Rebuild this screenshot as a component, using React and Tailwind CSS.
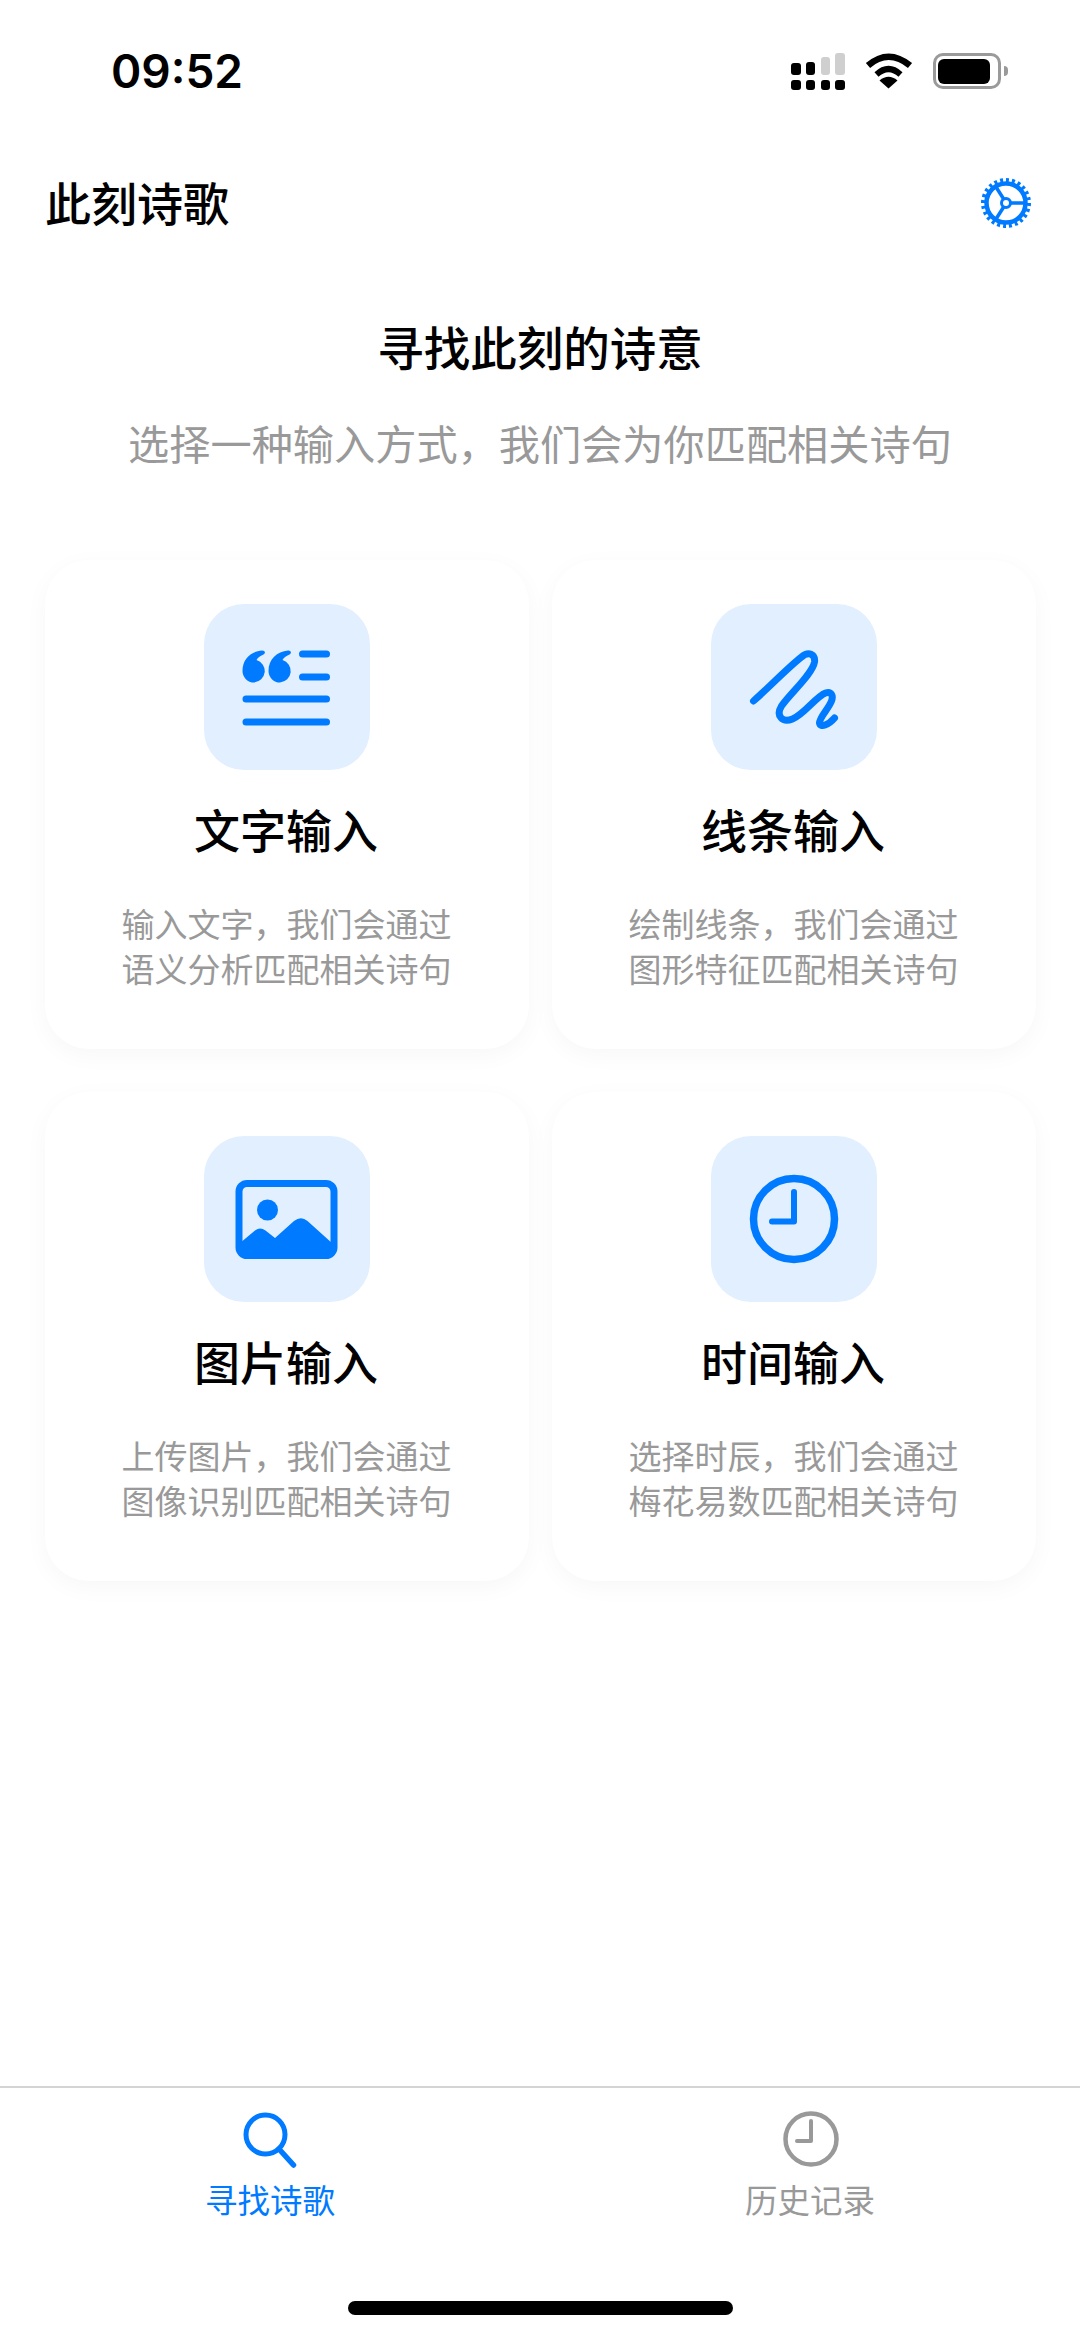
import React from 'react';

const BLUE = '#007AFF';
const cjk = "font-['Noto_Sans_CJK_SC','Noto_Sans',sans-serif]";

const QuoteIcon = () => (
    <svg className="size-[166px]" viewBox="24 22 166 166" fill="none">
        <path d="M74 100.500A11.500 11.500 0 0 1 62.500 89C62.500 77 71 69.500 82 68.500C85 68.500 86 71 83.500 72.500C80 74 77.500 76 76.500 78A11.500 11.500 0 0 1 74 100.500Z" fill={BLUE} />
        <path d="M100 100.500A11.500 11.500 0 0 1 88.500 89C88.500 77 97 69.500 108 68.500C111 68.500 112 71 109.500 72.500C106 74 103.500 76 102.500 78A11.500 11.500 0 0 1 100 100.500Z" fill={BLUE} />
        <g stroke={BLUE} strokeWidth="7" strokeLinecap="round">
            <path d="M122.500 72H146.500" />
            <path d="M122.500 95H146.500" />
            <path d="M66 117H146.500" />
            <path d="M66 140H146.500" />
        </g>
    </svg>
);

const ScribbleIcon = () => (
    <svg className="size-[166px]" viewBox="19.500 22 166 166" fill="none">
        <path
            d="M62 119C80 103 96 86 110 75C117 69 124 72 123 80C121 92 100 110 90 124C84 134 91 141 101 137C113 132 124 115 134 111C140 109 142 114 140 119C137 127 128 135 128 141C129 146 137 143 143 136"
            stroke={BLUE}
            strokeWidth="7"
            strokeLinecap="round"
            strokeLinejoin="round"
        />
    </svg>
);

const ImageIcon = () => (
    <svg className="size-[166px]" viewBox="24 20 166 166" fill="none">
        <rect x="59" y="67.500" width="95" height="72" rx="8" stroke={BLUE} strokeWidth="7" />
        <circle cx="87.500" cy="94" r="10.500" fill={BLUE} />
        <path d="M60 127L75 114.500Q80 110.500 85.500 114.500L95 122L114 105Q121 99.500 127.500 105L153 128V140H60Z" fill={BLUE} />
    </svg>
);

const ClockIcon = () => (
    <svg className="size-[166px]" viewBox="0 0 166 166" fill="none">
        <circle cx="83" cy="83" r="40.500" stroke={BLUE} strokeWidth="7.500" />
        <path d="M83 56V85.500H61" stroke={BLUE} strokeWidth="6" strokeLinecap="round" strokeLinejoin="round" />
    </svg>
);

const SignalIcon = () => (
    <div className="flex flex-col gap-[5px] w-[54px]">
        <div className="flex items-end justify-between h-[22px]">
            <div className="w-[9.5px] h-[12px] rounded-[3px] bg-black" />
            <div className="w-[9.5px] h-[13px] rounded-[3px] bg-black" />
            <div className="w-[9.5px] h-[18px] rounded-[3px] bg-[#cfcfcf]" />
            <div className="w-[9.5px] h-[22px] rounded-[3px] bg-[#cfcfcf]" />
        </div>
        <div className="flex justify-between">
            <div className="w-[9.5px] h-[10px] rounded-[3px] bg-black" />
            <div className="w-[9.5px] h-[10px] rounded-[3px] bg-black" />
            <div className="w-[9.5px] h-[10px] rounded-[3px] bg-black" />
            <div className="w-[9.5px] h-[10px] rounded-[3px] bg-black" />
        </div>
    </div>
);

const WifiIcon = () => (
    <svg className="w-[48px] h-[36px]" viewBox="0 0 48 36" fill="none">
        <path d="M3 12.500Q23.500 -5 45 12.500" stroke="#000" strokeWidth="6.500" />
        <path d="M11.500 21.500Q23.500 10.500 35.500 21.500" stroke="#000" strokeWidth="6" />
        <path d="M23.500 35.500L14.500 27.500Q23.500 20 32.500 27.500Z" fill="#000" />
    </svg>
);

const BatteryIcon = () => (
    <div className="flex items-center">
        <div className="w-[68px] h-[36px] rounded-[10px] border-[3px] border-[#9a9a9a] pl-[2px] flex items-center">
            <div className="w-[52px] h-[25px] rounded-[6px] bg-black" />
        </div>
        <div className="ml-[3px] w-[4px] h-[10px] rounded-r-full bg-[#9a9a9a]" />
    </div>
);

const GearIcon = () => (
    <svg className="size-[52px]" viewBox="0 0 52 52" fill="none">
        <circle cx="26" cy="26" r="22.500" stroke={BLUE} strokeWidth="5" pathLength="48" strokeDasharray="1 1" />
        <circle cx="26" cy="26" r="19.500" stroke={BLUE} strokeWidth="4.500" />
        <path d="M30 26H45M24 22.500L16 10M24 29.500L16 42" stroke={BLUE} strokeWidth="3.500" />
        <circle cx="26" cy="26" r="4.500" stroke={BLUE} strokeWidth="3" />
    </svg>
);

const cards = [
    { title: '文字输入', lines: ['输入文字，我们会通过', '语义分析匹配相关诗句'], Icon: QuoteIcon },
    { title: '线条输入', lines: ['绘制线条，我们会通过', '图形特征匹配相关诗句'], Icon: ScribbleIcon },
    { title: '图片输入', lines: ['上传图片，我们会通过', '图像识别匹配相关诗句'], Icon: ImageIcon },
    { title: '时间输入', lines: ['选择时辰，我们会通过', '梅花易数匹配相关诗句'], Icon: ClockIcon },
];

const Card = ({ title, lines, Icon }) => (
    <div className="h-[489px] rounded-[44px] bg-white shadow-[0_6px_24px_rgba(0,0,0,0.035)] flex flex-col items-center pt-[44px]">
        <div className="size-[166px] rounded-[40px] bg-[#E2EFFF] flex items-center justify-center">
            <Icon />
        </div>
        <h3 className="mt-[26px] pr-[2px] text-[46px] leading-[64px] font-medium text-black">{title}</h3>
        <div className="mt-[41px] pr-[1px] text-[33px] leading-[45px] text-[#999999] text-center">
            {lines.map((line) => (
                <p key={line}>{line}</p>
            ))}
        </div>
    </div>
);

export default function App() {
    return (
        <div className={`w-[1080px] h-[2337px] bg-white flex flex-col overflow-hidden ${cjk}`}>
            {/* Status bar */}
            <div className="h-[142px] shrink-0 flex items-start justify-between pt-[53px] pl-[111px] pr-[72px]">
                <span className="font-['Inter',sans-serif] text-[46px] leading-[37px] font-semibold text-black">09:52</span>
                <div className="flex items-start gap-[20px]">
                    <SignalIcon />
                    <WifiIcon />
                    <BatteryIcon />
                </div>
            </div>

            {/* Nav bar */}
            <div className="h-[172px] shrink-0 flex items-start justify-between pl-[45px] pr-[48px] pt-[27px]">
                <h1 className="text-[46px] leading-[64px] font-medium text-black">此刻诗歌</h1>
                <div className="pt-[8px]">
                    <GearIcon />
                </div>
            </div>

            {/* Heading */}
            <div className="shrink-0 flex flex-col items-center">
                <h2 className="text-[46.500px] leading-[64px] font-medium text-black">寻找此刻的诗意</h2>
                <p className="mt-[34px] text-[41.200px] leading-[60px] text-[#999999]">选择一种输入方式，我们会为你匹配相关诗句</p>
            </div>

            {/* Cards */}
            <div className="mt-[88px] pl-[45px] pr-[44px] grid grid-cols-2 gap-x-[23px] gap-y-[43px]">
                {cards.map((card) => (
                    <Card key={card.title} {...card} />
                ))}
            </div>

            <div className="flex-1" />

            {/* Tab bar */}
            <div className="h-[251px] shrink-0 border-t-2 border-[#d4d4d4] flex flex-col">
                <div className="flex pt-[22px]">
                    <div className="w-1/2 flex flex-col items-center">
                        <svg className="size-[58px]" viewBox="0 0 58 58" fill="none">
                            <circle cx="24.500" cy="24.500" r="19.500" stroke={BLUE} strokeWidth="5" />
                            <path d="M38 39L52.500 55" stroke={BLUE} strokeWidth="5.500" strokeLinecap="round" />
                        </svg>
                        <span className="mt-[9px] text-[32.500px] leading-[44px] text-[#007AFF]">寻找诗歌</span>
                    </div>
                    <div className="w-1/2 flex flex-col items-center">
                        <svg className="size-[58px]" viewBox="-1 0 58 58" fill="none">
                            <circle cx="29" cy="29" r="25.500" stroke="#999999" strokeWidth="4.500" />
                            <path d="M29 11V31H15" stroke="#999999" strokeWidth="4" strokeLinecap="round" strokeLinejoin="round" />
                        </svg>
                        <span className="mt-[9px] text-[32.500px] leading-[44px] text-[#999999]">历史记录</span>
                    </div>
                </div>
                <div className="mt-auto mb-[22px] mx-auto w-[385px] h-[14px] rounded-full bg-black" />
            </div>
        </div>
    );
}
